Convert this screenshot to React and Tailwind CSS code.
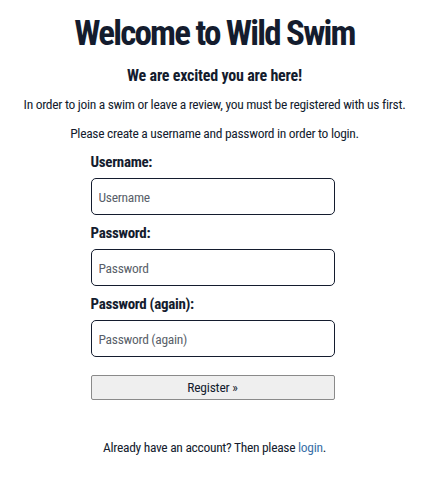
export default function App() {
  return (
    <div className="min-h-[495px] bg-white text-[#141c2e] flex flex-col items-center font-['Roboto',sans-serif] font-stretch-condensed">
      <h1 className="mt-[12px] text-[35px] leading-[44px] font-bold tracking-[-1.8px]">Welcome to Wild Swim</h1>
      <h2 className="mt-[9px] text-[16px] leading-[22px] font-bold tracking-[-0.2px]">We are excited you are here!</h2>
      <p className="mt-[7px] text-[13.5px] leading-[20px] tracking-[-0.3px] whitespace-nowrap">
        In order to join a swim or leave a review, you must be registered with us first.
      </p>
      <p className="mt-[9px] text-[13.5px] leading-[20px] tracking-[-0.3px]">
        Please create a username and password in order to login.
      </p>

      <form className="mt-[9px] mr-[4px] w-[244px] flex flex-col" onSubmit={e => e.preventDefault()}>
        <Field label="Username:" placeholder="Username" type="text" />
        <Field label="Password:" placeholder="Password" type="password" />
        <Field label="Password (again):" placeholder="Password (again)" type="password" />
        <button
          type="submit"
          className="mt-[10px] h-[25px] w-full bg-[#efefef] border border-[#8a8a8a] rounded-[2px] text-[13.5px] tracking-[-0.2px] text-[#141c2e] font-stretch-condensed"
        >
          Register »
        </button>
      </form>

      <p className="mt-[37px] text-[13.5px] leading-[20px] tracking-[-0.3px]">
        Already have an account? Then please <a href="#" className="text-[#3a6fa8]">login</a>.
      </p>
    </div>
  );
}

function Field({ label, placeholder, type }) {
  return (
    <div className="flex flex-col mb-[8px]">
      <label className="text-[15px] leading-[20px] font-bold tracking-[-0.3px]">{label}</label>
      <input
        type={type}
        placeholder={placeholder}
        className="mt-[6px] h-[37px] w-full px-[7px] border border-[#141c2e] rounded-[5px] text-[13.5px] tracking-[-0.3px] font-stretch-condensed placeholder:text-[#5a5f6a] outline-none"
      />
    </div>
  );
}
